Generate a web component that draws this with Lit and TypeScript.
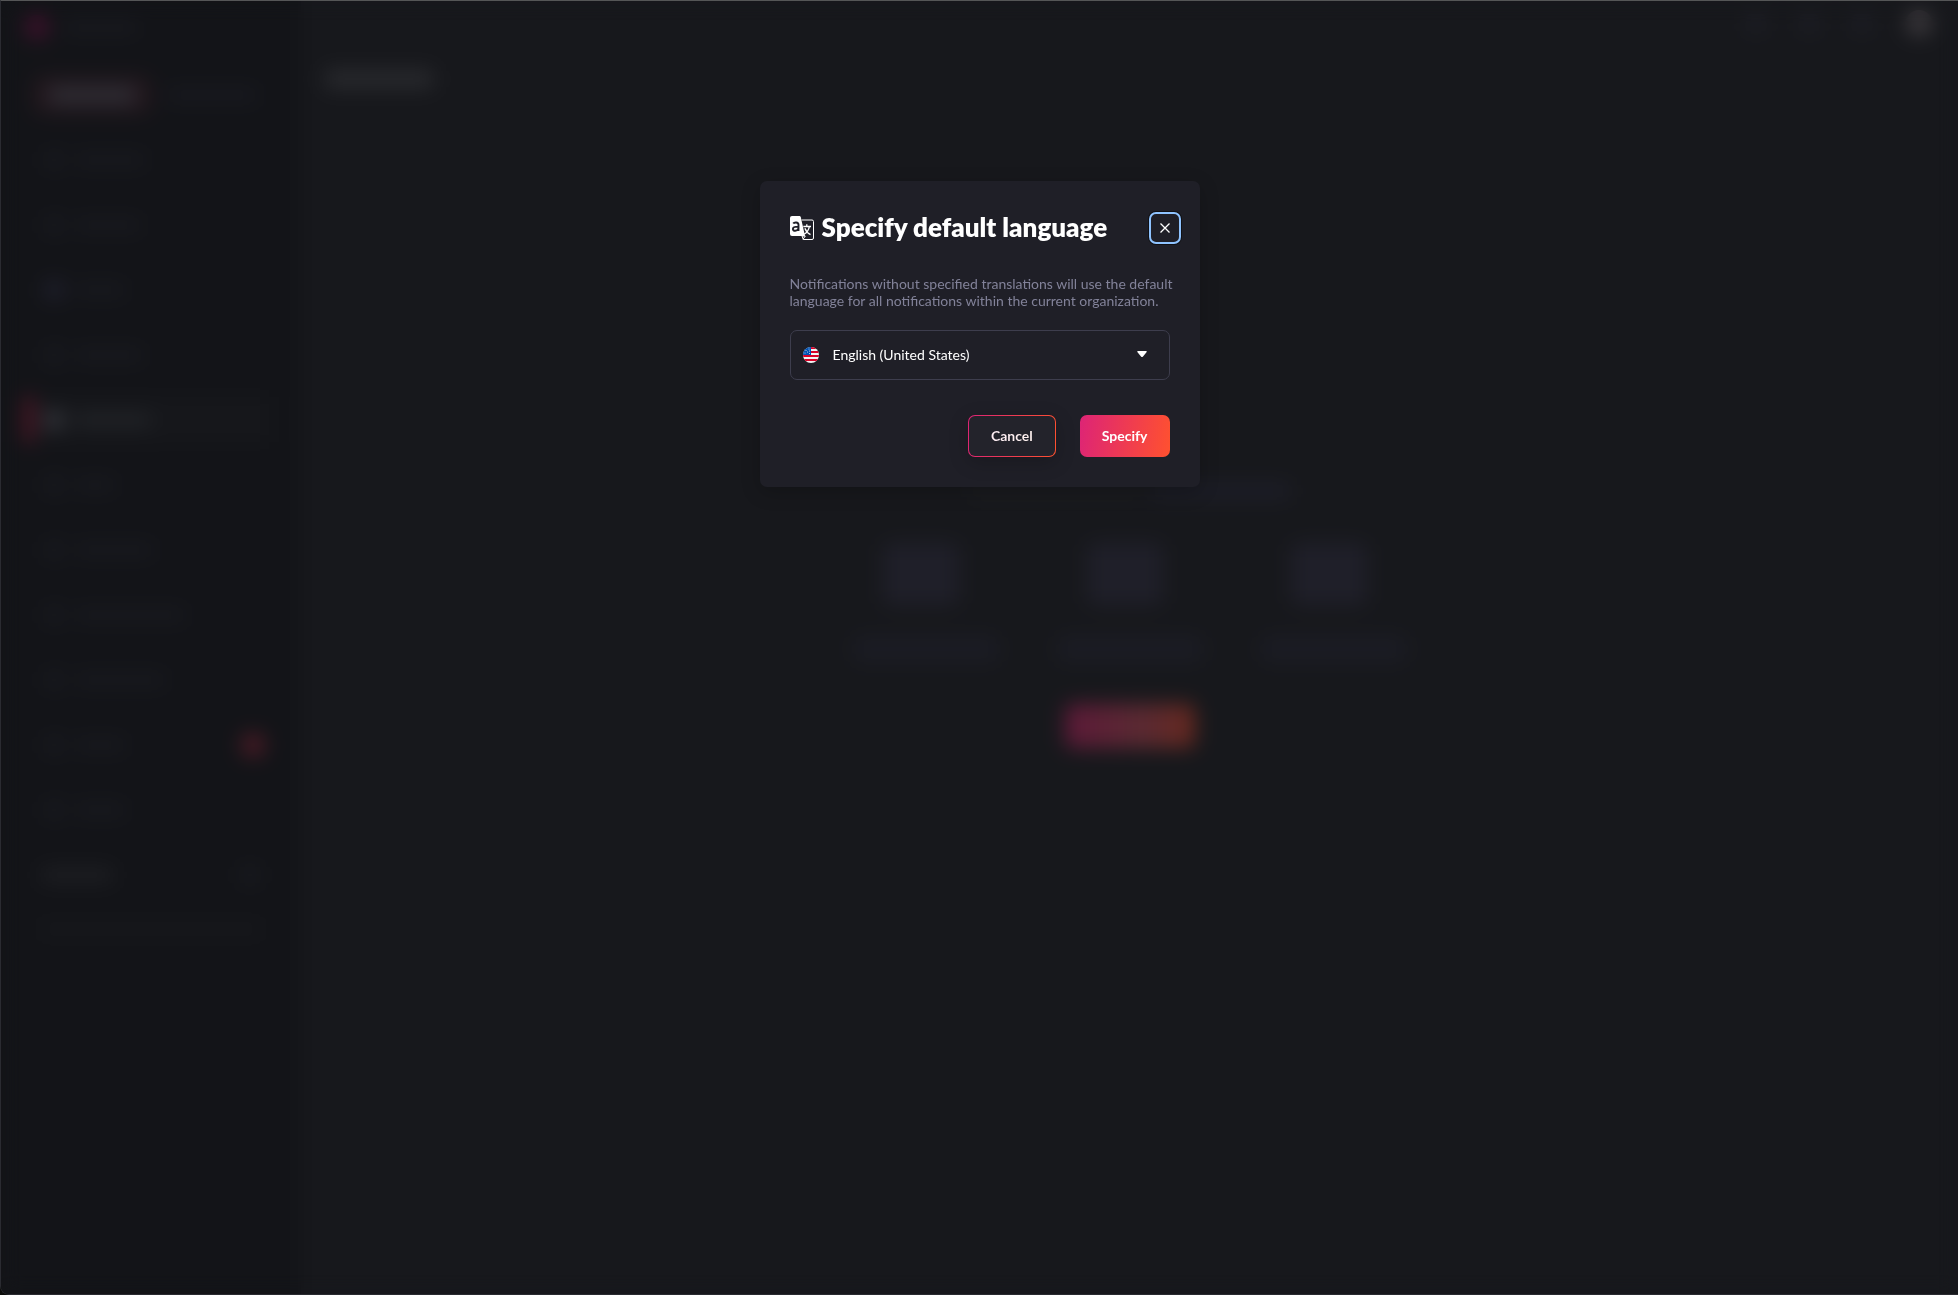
import { LitElement, html, svg, css } from "lit";
import { customElement, state } from "lit/decorators.js";

const translateIcon = svg`
  <path fill="#fff" d="M2 0h7.2c.8 0 1.400.5 1.600 1.200L15 20H2a2 2 0 0 1-2-2V2a2 2 0 0 1 2-2z"/>
  <path fill="none" stroke="#fff" d="M11.600 4H22a1.500 1.500 0 0 1 1.500 1.500V22a1.500 1.500 0 0 1-1.500 1.500H13.300L12 20l3.300 0-2.300 3.300"/>
  <path fill="none" stroke="#1f1f27" stroke-width="1.900" d="M3.200 7.600c.9-1.500 5.300-1.900 5.300 1.200v6.200M8.300 10.600c-2.900 0-5.400.3-5.400 2.300 0 2.700 4.300 2.400 5.400-.1"/>
  <path fill="none" stroke="#fff" stroke-width="1.300" d="M13.300 10.500h7.700M16.800 8.300v2.200M19.300 10.800c-.7 3.500-2.600 5.900-5.300 7.400M14.900 12.200c1 2.900 2.800 5 5.600 6.400"/>`;

const flagIcon = svg`
  <defs><clipPath id="disc"><circle cx="8" cy="8" r="8"/></clipPath></defs>
  <g clip-path="url(#disc)">
    <path fill="#f3f3f3" d="M0 0h16v16H0z"/>
    <path fill="#d80027" d="M8 0h8v2H8zM8 4h8v2H8zM0 8h16v2H0zM0 12h16v2H0z" />
    <path fill="#0052b4" d="M0 0h8v8H0z"/>
    <g fill="#f0f0f0"><circle cx="3" cy="3.500" r=".5"/><circle cx="6" cy="2" r=".5"/><circle cx="4.500" cy="5" r=".5"/><circle cx="2" cy="6" r=".5"/><circle cx="6.500" cy="4" r=".5"/><circle cx="6.500" cy="6.500" r=".5"/></g>
  </g>`;

/** Label widths of the navigation entries behind the dialog. */
const navRows = [
  { width: 70 },
  { width: 66 },
  { width: 50, tone: "cool" },
  { width: 68 },
  { width: 76, tone: "active" },
  { width: 40 },
  { width: 78 },
  { width: 110 },
  { width: 90 },
  { width: 50, badge: true },
  { width: 50 },
];

@customElement("app-backdrop")
export class AppBackdrop extends LitElement {
  static styles = css`
    :host {
      display: grid;
      grid-template-columns: 300px 1fr;
      min-height: inherit;
      background: #17181c;
    }
    .side {
      background: #131418;
      padding: 14px 32px 0 24px;
    }
    .row {
      display: flex;
      align-items: center;
    }
    .brand {
      gap: 16px;
      height: 24px;
    }
    .logo {
      width: 24px;
      height: 24px;
      border-radius: 12px;
      background: #3f102c;
    }
    .bar {
      height: 12px;
      border-radius: 4px;
      background: #191a20;
    }
    .name {
      width: 72px;
    }
    .tabs {
      height: 40px;
      margin: 36px 0 12px 8px;
      gap: 16px;
    }
    .tab {
      display: flex;
      justify-content: center;
      align-items: center;
      width: 118px;
      height: 38px;
      border-radius: 8px;
      background: #22171d;
    }
    .tab .bar {
      width: 86px;
      height: 16px;
      background: #2f2f36;
    }
    .tabs > .bar {
      width: 90px;
      background: #191a21;
    }
    .nav {
      height: 65px;
      gap: 12px;
      padding-left: 20px;
    }
    .dot {
      width: 18px;
      height: 18px;
      border-radius: 4px;
      background: #191a20;
    }
    .cool .dot {
      background: #20202e;
    }
    .badge {
      width: 24px;
      height: 24px;
      border-radius: 12px;
      margin: 0 4px 0 auto;
      background: #4c1b26;
    }
    .active {
      height: 45px;
      margin: 10px 0;
      padding-left: 0;
      background: #16171b;
    }
    .active .mark {
      width: 8px;
      height: 45px;
      background: #64152a;
    }
    .active .dot {
      background: #36373d;
    }
    .active .bar {
      background: #232529;
    }
    .section {
      height: 65px;
      padding: 0 10px 0 16px;
      justify-content: space-between;
    }
    .section .bar {
      width: 72px;
      height: 14px;
      background: #1e1f23;
    }
    .hint {
      width: 224px;
      margin: 16px 0 0 14px;
      background: #17181c;
    }
    .top {
      height: 44px;
      justify-content: flex-end;
      gap: 35px;
      padding-right: 26px;
    }
    .avatar {
      width: 26px;
      height: 26px;
      border-radius: 13px;
      background: #3c393d;
    }
    .top .dot {
      background: #1d1e26;
    }
    .title {
      width: 108px;
      height: 18px;
      margin: 25px 0 0 24px;
      background: #292a2e;
    }
    .empty {
      display: flex;
      flex-direction: column;
      align-items: center;
      padding-top: 395px;
    }
    .lead {
      display: flex;
      gap: 8px;
    }
    .lead .bar {
      width: 172px;
      height: 16px;
      background: #1b1c1f;
    }
    .lead .link {
      width: 140px;
      background: #1d1e28;
    }
    .steps {
      display: grid;
      grid-template-columns: repeat(3, 204px);
      justify-items: center;
      margin-top: 44px;
      row-gap: 31px;
    }
    .pic {
      width: 76px;
      height: 62px;
      margin-right: 10px;
      border-radius: 8px;
      background: #1f1f29;
    }
    .caption {
      width: 146px;
      height: 26px;
      border-radius: 8px;
      background: #1b1c24;
    }
    .action {
      width: 130px;
      height: 44px;
      margin-top: 42px;
      border-radius: 8px;
      background: linear-gradient(90deg, #5c1938, #5a2a32 60%, #66281e);
    }
  `;

  render() {
    return html`
      <div class="side">
        <div class="row brand"><div class="logo"></div><div class="bar name"></div></div>
        <div class="row tabs"><div class="tab"><div class="bar"></div></div><div class="bar"></div></div>
        ${navRows.map(
          (r) => html`<div class="row nav ${r.tone ?? ""}">
            ${r.tone === "active" ? html`<div class="mark"></div>` : ""}
            <div class="dot"></div>
            <div class="bar" style="width:${r.width}px"></div>
            ${r.badge ? html`<div class="badge"></div>` : ""}
          </div>`,
        )}
        <div class="row section"><div class="bar"></div><div class="dot"></div></div>
        <div class="bar hint"></div>
      </div>
      <div class="main">
        <div class="row top">
          <div class="dot"></div><div class="dot"></div><div class="dot"></div><div class="avatar"></div>
        </div>
        <div class="bar title"></div>
        <div class="empty">
          <div class="lead"><div class="bar"></div><div class="bar link"></div></div>
          <div class="steps">
            ${[0, 1, 2].map(() => html`<div class="pic"></div>`)}
            ${[0, 1, 2].map(() => html`<div class="caption"></div>`)}
          </div>
          <div class="action"></div>
        </div>
      </div>
    `;
  }
}

@customElement("language-dialog")
export class LanguageDialog extends LitElement {
  static styles = css`
    :host {
      display: block;
      width: 440px;
      max-width: 100%;
      font-family: Lato, "Liberation Sans", sans-serif;
      color: #fff;
    }
    * {
      box-sizing: border-box;
    }
    .dialog {
      padding: 30px;
      border-radius: 7px;
      background: #1f1f27;
      box-shadow: 0 5px 20px rgba(0, 0, 0, 0.2);
    }
    .header {
      display: flex;
      align-items: center;
      gap: 8px;
      margin-right: -11px;
    }
    h1 {
      margin: 0;
      padding-bottom: 2px;
      font-size: 26px;
      line-height: 32px;
      font-weight: 800;
      white-space: nowrap;
    }
    svg {
      display: block;
      flex: none;
    }
    .close {
      display: grid;
      place-items: center;
      width: 32px;
      height: 32px;
      margin-left: auto;
      padding: 0;
      border: 2px solid #8fc3ff;
      border-radius: 7px;
      background: #1f1f27;
      box-shadow: 0 0 0 1px #101014;
    }
    .text {
      margin: 30px 0 21px;
      font-size: 14px;
      line-height: 17px;
      color: #828299;
      text-wrap: nowrap;
    }
    .field {
      display: flex;
      align-items: center;
      height: 50px;
      padding: 0 22px 0 12px;
      border: 1px solid #3d3d4d;
      border-radius: 7px;
    }
    select {
      flex: 1;
      height: 48px;
      margin: 0;
      padding: 0 0 2px 14px;
      appearance: none;
      border: 0;
      outline: 0;
      background: transparent;
      color: #fff;
      font: 400 14px/17px Lato, "Liberation Sans", sans-serif;
    }
    .actions {
      display: flex;
      justify-content: flex-end;
      gap: 24px;
      margin-top: 35px;
    }
    .btn {
      height: 42px;
      padding: 0 22px 2px;
      border: 0;
      border-radius: 7px;
      color: #fff;
      font: 700 14px/17px Lato, "Liberation Sans", sans-serif;
      background: linear-gradient(99deg, #dd2476 0%, #ff512f 100%);
    }
    .outline {
      border: 1px solid transparent;
      background:
        linear-gradient(#23232b, #23232b) padding-box,
        linear-gradient(99deg, #dd2476 0%, #ff512f 100%) border-box;
      box-shadow: 0 5px 20px rgba(0, 0, 0, 0.2);
    }
    .outline span {
      background: linear-gradient(99deg, #ffeef5, #fff2ef);
      background-clip: text;
      color: transparent;
    }
  `;

  @state() private language = "en_US";

  private pick(event: Event) {
    this.language = (event.target as HTMLSelectElement).value;
  }

  render() {
    return html`
      <section class="dialog" role="dialog" aria-modal="true" aria-labelledby="title">
        <div class="header">
          <svg width="24" height="24" viewBox="0 0 24 24" aria-hidden="true">${translateIcon}</svg>
          <h1 id="title">Specify default language</h1>
          <button class="close" type="button" aria-label="Close">
            <svg width="10" height="10" viewBox="0 0 10 10" fill="none" stroke="#fff" stroke-width="1.300">
              <path d="M.5.5l9 9M9.500.5l-9 9" />
            </svg>
          </button>
        </div>
        <p class="text" id="about">
          Notifications without specified translations will use the default<br />language for all
          notifications within the current organization.
        </p>
        <div class="field">
          <svg width="16" height="16" viewBox="0 0 16 16" aria-hidden="true">${flagIcon}</svg>
          <select aria-label="Default language" aria-describedby="about" .value=${this.language} @change=${this.pick}>
            <option value="en_US">English (United States)</option>
          </select>
          <svg width="10" height="8" viewBox="0 0 10 8" aria-hidden="true">
            <path fill="#fff" d="M1 0h8q1.200 0 .7 1L6 5.600Q5 6.600 4 5.600L.3 1Q-.2 0 1 0z" />
          </svg>
        </div>
        <div class="actions">
          <button class="btn outline" type="button"><span>Cancel</span></button>
          <button class="btn" type="button">Specify</button>
        </div>
      </section>
    `;
  }
}

@customElement("app-root")
export class AppRoot extends LitElement {
  static styles = css`
    :host {
      display: block;
      background: #0c0d0b;
    }
    .frame {
      position: relative;
      box-sizing: border-box;
      min-height: 100vh;
      border: 1px solid #2a2b31;
      border-top-color: #555657;
      border-right: 0;
      border-bottom-left-radius: 9px;
      overflow: hidden;
    }
    .page {
      display: block;
      min-height: calc(100vh - 2px);
    }
    .overlay {
      position: absolute;
      inset: 0;
      display: flex;
      justify-content: center;
      align-items: flex-start;
      padding-top: 180px;
      backdrop-filter: blur(10px);
    }
  `;

  render() {
    return html`
      <div class="frame">
        <div class="page"><app-backdrop aria-hidden="true"></app-backdrop></div>
        <div class="overlay"><language-dialog></language-dialog></div>
      </div>
    `;
  }
}
